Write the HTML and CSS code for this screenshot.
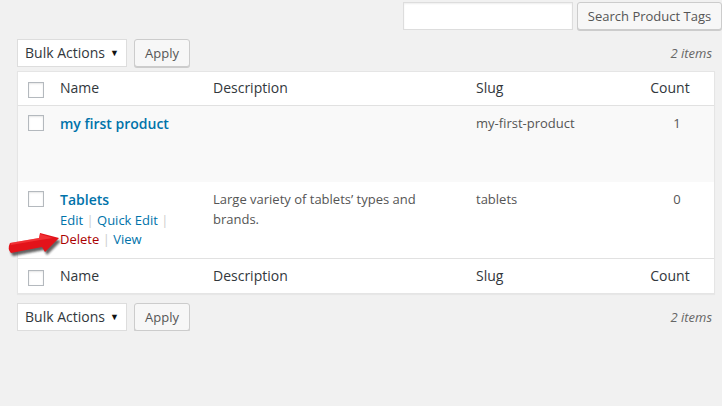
FILE: index.html
```html
<!DOCTYPE html>
<html lang="en">
<head>
    <meta charset="UTF-8">
    <title>Product Tags</title>
    <link rel="stylesheet" href="styles.css">
</head>
<body>
    <div class="wrap">
        <div class="search-box">
            <input type="search" class="search-input">
            <button class="button search-btn">Search Product Tags</button>
        </div>

        <div class="tablenav">
            <div class="actions">
                <div class="select">Bulk Actions <span class="caret">&#9660;</span></div>
                <button class="button">Apply</button>
            </div>
            <span class="num-items">2 items</span>
        </div>

        <table class="list-table">
            <colgroup>
                <col class="col-cb">
                <col class="col-name">
                <col class="col-desc">
                <col class="col-slug">
                <col class="col-count">
            </colgroup>
            <thead>
                <tr>
                    <th class="cb"><span class="checkbox"></span></th>
                    <th>Name</th>
                    <th>Description</th>
                    <th>Slug</th>
                    <th class="count">Count</th>
                </tr>
            </thead>
            <tbody>
                <tr class="alt">
                    <td class="cb"><span class="checkbox"></span></td>
                    <td><a class="row-title">my first product</a></td>
                    <td></td>
                    <td>my-first-product</td>
                    <td class="count">1</td>
                </tr>
                <tr>
                    <td class="cb"><span class="checkbox"></span></td>
                    <td>
                        <a class="row-title">Tablets</a>
                        <div class="row-actions">
                            <a>Edit</a> <span class="sep">|</span> <a>Quick Edit</a> <span class="sep">|</span>
                            <a class="delete">Delete</a> <span class="sep">|</span> <a>View</a>
                        </div>
                    </td>
                    <td>Large variety of tablets’ types and brands.</td>
                    <td>tablets</td>
                    <td class="count">0</td>
                </tr>
            </tbody>
            <tfoot>
                <tr>
                    <th class="cb"><span class="checkbox"></span></th>
                    <th>Name</th>
                    <th>Description</th>
                    <th>Slug</th>
                    <th class="count">Count</th>
                </tr>
            </tfoot>
        </table>

        <div class="tablenav bottom">
            <div class="actions">
                <div class="select">Bulk Actions <span class="caret">&#9660;</span></div>
                <button class="button">Apply</button>
            </div>
            <span class="num-items">2 items</span>
        </div>

        <!-- pointer arrow drawn over the screenshot -->
        <svg class="pointer" width="60" height="30" viewBox="0 0 60 30">
            <defs>
                <filter id="soft"><feGaussianBlur stdDeviation="1.2"/></filter>
            </defs>
            <path d="M7,17 L36,12 L37,7 L56,12 L42,26 L39,21 L8,27 Q4,23 7,17 Z" fill="#222" opacity="0.7" filter="url(#soft)"/>
            <path d="M5,14 L34,9 L35,4 L54,9 L40,23 L37,18 L6,24 Q2,20 5,14 Z" fill="#e3131a"/>
            <path d="M5,14 L34,9 L35,5 L48,9 L35,11 L6,16 Z" fill="#ff4d4d" opacity="0.5"/>
        </svg>
    </div>
</body>
</html>
```

FILE: styles.css
```css
body {
    margin: 0;
    background: #f1f1f1;
    font-family: "Open Sans", "Liberation Sans", sans-serif;
    font-size: 13px;
    color: #555;
}

.wrap {
    position: relative;
    padding: 2px 8px 0 17px;
}

.search-box {
    display: flex;
    justify-content: flex-end;
    gap: 4px;
    margin-right: -8px;
}

.search-input {
    width: 170px;
    height: 28px;
    box-sizing: border-box;
    border: 1px solid #ddd;
    background: #fff;
    box-shadow: inset 0 1px 2px rgba(0,0,0,0.07);
    margin: 0;
}

.button {
    height: 28px;
    box-sizing: border-box;
    padding: 0 10px;
    border: 1px solid #ccc;
    border-radius: 3px;
    background: #f7f7f7;
    box-shadow: 0 1px 0 #ccc;
    color: #555;
    font-family: inherit;
    font-size: 13px;
    line-height: 26px;
}

.search-btn {
    width: 145px;
    padding: 0;
}

.tablenav {
    display: flex;
    justify-content: space-between;
    align-items: center;
    height: 28px;
    margin-top: 9px;
}

.tablenav.bottom {
    margin-top: 9px;
}

.actions {
    display: flex;
    gap: 7px;
}

.select {
    width: 110px;
    height: 28px;
    box-sizing: border-box;
    border: 1px solid #ddd;
    background: #fff;
    padding: 0 7px 0 7px;
    line-height: 26px;
    font-size: 14px;
    color: #32373c;
    display: flex;
    justify-content: space-between;
}

.caret {
    font-size: 9px;
    color: #111;
}

.num-items {
    font-style: italic;
    color: #666;
    padding-right: 2px;
}

.list-table {
    width: 100%;
    margin-top: 4px;
    border: 1px solid #e5e5e5;
    border-spacing: 0;
    table-layout: fixed;
    background: #fff;
    box-shadow: 0 1px 1px rgba(0,0,0,0.04);
}

.col-cb { width: 32px; }
.col-name { width: 153px; }
.col-desc { width: 263px; }
.col-slug { width: 174px; }
.col-count { width: 74px; }

th {
    text-align: left;
    font-weight: normal;
    font-size: 14px;
    color: #32373c;
    line-height: 20px;
}

thead th {
    padding: 6px 10px 7px;
    border-bottom: 1px solid #e1e1e1;
}

tfoot th {
    padding: 7px 10px;
    border-top: 1px solid #e1e1e1;
}

td {
    vertical-align: top;
    padding: 8px 10px;
    line-height: 19.5px;
    height: 60px;
}

td.cb {
    padding: 9px 0 0 10px;
}

thead th.cb {
    padding: 8px 0 5px 10px;
}

tfoot th.cb {
    padding: 9px 0 5px 10px;
}

.checkbox {
    display: block;
    width: 16px;
    height: 16px;
    box-sizing: border-box;
    border: 1px solid #b4b9be;
    background: #fff;
    box-shadow: inset 0 1px 2px rgba(0,0,0,0.1);
}

td.count {
    text-align: center;
}

th.count {
    text-align: center;
    padding-right: 24px;
}

.alt td {
    background: #f9f9f9;
}

.row-title {
    color: #0073aa;
    font-weight: 600;
    font-size: 14px;
    line-height: 20px;
}

.row-actions {
    color: #0073aa;
}

.row-actions .sep {
    color: #ccc;
}

.row-actions .delete {
    color: #a00;
}

.pointer {
    position: absolute;
    left: 5px;
    top: 229px;
}
```
